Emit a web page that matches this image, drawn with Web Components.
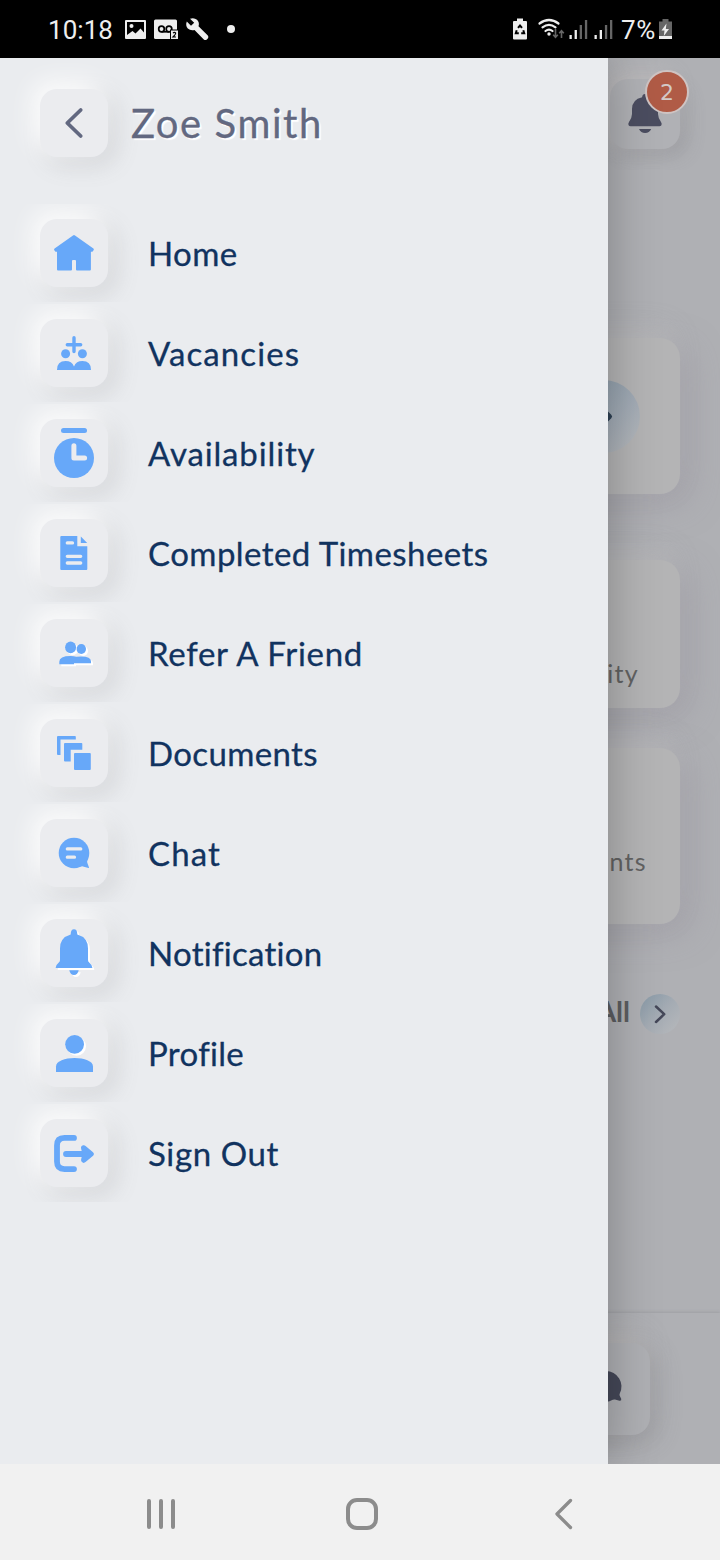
<!DOCTYPE html>
<html lang="en">
<head>
<meta charset="utf-8">
<title>Menu</title>
<style>
    html, body {
        margin: 0;
        padding: 0;
    }

    body {
        width: 720px;
        height: 1560px;
        overflow: hidden;
        font-family: Lato, "Open Sans", sans-serif;
    }
</style>
</head>
<body>
<phone-screen>
    <status-bar slot="status"></status-bar>
    <home-page slot="page"></home-page>
    <side-drawer slot="drawer" name="Zoe Smith">
        <menu-item icon="home" width="89.5">Home</menu-item>
        <menu-item icon="vacancies" width="152">Vacancies</menu-item>
        <menu-item icon="availability" width="167.5">Availability</menu-item>
        <menu-item icon="timesheets" width="340.5">Completed Timesheets</menu-item>
        <menu-item icon="refer" width="215" raised>Refer A Friend</menu-item>
        <menu-item icon="documents" width="170">Documents</menu-item>
        <menu-item icon="chat" width="73">Chat</menu-item>
        <menu-item icon="notification" width="175" raised>Notification</menu-item>
        <menu-item icon="profile" width="95.5">Profile</menu-item>
        <menu-item icon="signout" width="131">Sign Out</menu-item>
    </side-drawer>
    <nav-bar slot="nav"></nav-bar>
</phone-screen>

<script>
const icons = {
    back: `<path d="M40.7 21L27.3 34l13.4 13" fill="none" stroke="#626880" stroke-width="3.8" stroke-linecap="round" stroke-linejoin="round"/>`,
    home: `<path d="M33 16.4q1-.7 2 0L53.4 29.6q.8.8.2 1.7l-1.2 1.4h-1.5v17.8q0 1-1 1H37q-1 0-1-1V42q0-1-1-1h-2q-1 0-1 1v8.500q0 1-1 1H18q-1 0-1-1V32.700h-1.500l-1.200-1.400q-.6-.9.3-1.700z"/>`,
    vacancies: `<path d="M34 18.700v13.800M27.300 25.700h13.400" stroke="currentColor" stroke-width="3.400" stroke-linecap="round"/>
        <circle cx="25.600" cy="34.700" r="4.500"/><circle cx="42.400" cy="34.700" r="4.500"/>
        <path d="M17 50.900q0-8.800 8.600-8.800 6.200 0 8.400 5.400 2.200-5.400 8.400-5.400 8.600 0 8.600 8.800z"/>`,
    availability: `<path d="M23.500 11.500h21" stroke="currentColor" stroke-width="5" stroke-linecap="round"/>
        <circle cx="34" cy="39" r="20"/>
        <path d="M33.900 26.800V39h10.700" fill="none" stroke="#ebecef" stroke-width="5" stroke-linecap="round" stroke-linejoin="round"/>`,
    timesheets: `<path d="M21.300 17h16v10.300h10V50q0 1-1 1h-25q-1 0-1-1V18q0-1 1-1zM40.800 17.500l6.400 6.500h-6.400z"/>
        <path d="M27.300 23.900h5.200M27.300 37.300h13.400M27.300 44h13.400" stroke="#ebecef" stroke-width="3.300" stroke-linecap="round"/>`,
    refer: `<ellipse cx="30.600" cy="28.300" rx="5.500" ry="5.900"/><ellipse cx="41.300" cy="30" rx="4.700" ry="5.100"/>
        <path d="M19.300 45.300v-2.600q0-5.700 11.300-5.700 3.600 0 5.600.7 2-.2 5-.2 9.800 0 9.800 4.800v2H34v1z"/>`,
    documents: `<path d="M18 17h17q.8 0 .8.800v2.600H20.500V36H18q-1 0-1-1V18q0-1 1-1z"/>
        <path d="M25 24h16.500q.8 0 .8.800v5.900H30.700v11.800H25q-1 0-1-1V25q0-1 1-1z"/>
        <rect x="34" y="34" width="16.800" height="16.900" rx="1"/>`,
    chat: `<circle cx="34" cy="34" r="15.300"/>
        <path d="M48 39.500q-1.300 2.500-.7 4.300l1.700 4.800q.1.600-.5.400l-5.500-1.600q-1.500-.3-3.500.4z"/>
        <path d="M27.300 29.900h13.500M27.300 38.200h7.200" stroke="#ebecef" stroke-width="3.200" stroke-linecap="round"/>`,
    notification: `<path d="M34 10.300q3.300 0 3.300 5.200Q48 18.500 48 29.500V41q0 1.500 1.200 2.600 3.200 2.600 3.200 5.400H15.600q0-2.800 3.200-5.400Q20 42.500 20 41V29.500q0-11 10.700-14 0-5.200 3.300-5.200zM29.300 51.300h9.400q-1 4.700-4.700 4.700t-4.700-4.700z"/>`,
    profile: `<circle cx="36.600" cy="27.300" r="9.400" fill="#fff"/><circle cx="34.600" cy="25.300" r="9.400"/><path d="M16 53v-5.500c0-5.500 9-8.500 18.600-8.500S53 42 53 47.500V53z"/>`,
    signout: `<path d="M34 18.900h-9.500q-7.500 0-7.500 7.500v16.200q0 7.500 7.500 7.500H34M26 35h20" fill="none" stroke="currentColor" stroke-width="5.800" stroke-linecap="round"/>
        <path d="M43.800 29l7.200 6-7.200 6 1.500-6z" stroke="currentColor" stroke-width="5.500" stroke-linejoin="round"/>`
};

function define(name, html, connected) {
    customElements.define(name, class extends HTMLElement {
        constructor() {
            super();
            this.attachShadow({mode: "open"}).innerHTML = html;
        }

        connectedCallback() {
            if (connected) connected.call(this, this.shadowRoot);
        }
    });
}

// spreads the letters so that the text takes the given width
class FitText extends HTMLElement {
    constructor() {
        super();
        this.attachShadow({mode: "open"}).innerHTML = `
            <style>
                :host { display: block; white-space: nowrap; }
                span { display: inline-block; }
            </style>
            <span><slot></slot></span>`;
    }

    static get observedAttributes() {
        return ["width"];
    }

    connectedCallback() {
        this.fit();
    }

    attributeChangedCallback() {
        if (this.isConnected) this.fit();
    }

    fit() {
        const span = this.shadowRoot.querySelector("span");
        const length = this.textContent.trim().length;
        if (!length || !this.hasAttribute("width")) return;
        span.style.letterSpacing = "0";
        const natural = span.getBoundingClientRect().width;
        span.style.letterSpacing = (this.getAttribute("width") - natural) / length + "px";
    }
}

customElements.define("fit-text", FitText);

define("soft-button", `
    <style>
        :host {
            display: block;
            flex: none;
            width: 68px;
            height: 68px;
            border-radius: 17px;
            background: #ebecef;
            color: #67a8f9;
            box-shadow: -7px -7px 24px rgba(255,255,255,.95), 7px 7px 24px rgba(110,110,115,.2);
        }

        svg {
            display: block;
            fill: currentColor;
            overflow: visible;
        }

        :host([raised]) svg {
            filter: drop-shadow(2px 2px 0 #fff);
        }
    </style>
    <svg width="68" height="68" viewBox="0 0 68 68"></svg>`, function (root) {
    root.querySelector("svg").innerHTML = icons[this.getAttribute("icon")] || "";
});

define("menu-item", `
    <style>
        :host {
            display: flex;
            align-items: flex-start;
            gap: 40px;
            height: 98px;
            padding: 15px 0 0 40px;
            box-sizing: border-box;
            overflow: hidden;
            color: #11335f;
            font-size: 33px;
            line-height: 40px;
        }

        fit-text {
            margin-top: 14px;
            -webkit-text-stroke: .3px #11335f;
        }
    </style>
    <fit-text></fit-text>`, function (root) {
    const text = root.querySelector("fit-text");
    const button = document.createElement("soft-button");
    button.setAttribute("icon", this.getAttribute("icon"));
    if (this.hasAttribute("raised")) button.setAttribute("raised", "");
    root.insertBefore(button, text);
    text.textContent = this.textContent;
    text.setAttribute("width", this.getAttribute("width"));
});

define("side-drawer", `
    <style>
        :host {
            display: flex;
            flex-direction: column;
            width: 608px;
            height: 100%;
            background: #eaecef;
            box-shadow: 0 0 48px rgba(0,0,0,.28);
        }

        header {
            display: flex;
            gap: 20px;
            height: 146px;
            padding: 31px 0 0 40px;
            box-sizing: border-box;
            overflow: hidden;
        }

        header fit-text {
            margin: 10px 0 0 3px;
            font-size: 40px;
            line-height: 48px;
            color: #626880;
            text-shadow: 2px 2px 1px #fff;
            -webkit-text-stroke: .3px #626880;
        }

        nav {
            display: flex;
            flex-direction: column;
            gap: 2px;
        }
    </style>
    <header>
        <soft-button icon="back"></soft-button>
        <fit-text></fit-text>
    </header>
    <nav><slot></slot></nav>`, function (root) {
    const text = root.querySelector("fit-text");
    text.textContent = this.getAttribute("name");
    text.setAttribute("width", "192");
});

define("home-page", `
    <style>
        :host {
            display: flex;
            flex-direction: column;
            height: 100%;
            background: #afb0b4;
            color: #626262;
        }

        header {
            display: flex;
            justify-content: flex-end;
            height: 112px;
            padding: 21px 40px 0 0;
            box-sizing: border-box;
            overflow: hidden;
        }

        .bell {
            position: relative;
            width: 70px;
            height: 70px;
            border-radius: 18px;
            background: #b0b1b5;
            box-shadow: -6px -6px 18px rgba(200,196,196,.6), 7px 7px 18px rgba(120,120,125,.3);
        }

        .badge {
            position: absolute;
            top: -9px;
            left: 35px;
            width: 40px;
            height: 40px;
            border: 2px solid #cfc4c3;
            border-radius: 50%;
            background: #b05b46;
            color: #d3c9c8;
            font: 22px/42px "DejaVu Sans", sans-serif;
            text-align: center;
        }

        main {
            display: flex;
            flex-direction: column;
            align-items: flex-end;
            flex: 1;
            padding: 168px 40px 0 0;
        }

        .card {
            display: flex;
            align-items: flex-end;
            justify-content: flex-end;
            width: 310px;
            box-sizing: border-box;
            border-radius: 20px;
            background: #b4b4b5;
            box-shadow: -8px -8px 24px rgba(190,190,190,.55), 10px 10px 32px rgba(150,146,158,.5);
            font-size: 25px;
            line-height: 30px;
            letter-spacing: 1.300px;
        }

        .wide {
            align-items: center;
            width: 640px;
            height: 156px;
            padding-right: 40px;
            margin-bottom: 66px;
        }

        .short {
            height: 148px;
            padding: 0 41px 20px 0;
            margin-bottom: 40px;
        }

        .tall {
            height: 176px;
            padding: 0 33px 48px 0;
        }

        .disc {
            display: block;
            border-radius: 50%;
            background: linear-gradient(135deg, #8799a7, #a4abb3 50%, #b7b9bc);
        }

        .wide .disc {
            background: linear-gradient(135deg, #8799a7, #a3acb6 60%, #b7b9bc);
        }

        .all {
            display: flex;
            align-items: center;
            gap: 10px;
            margin-top: 70px;
            color: #5c5d60;
            font-size: 28px;
            font-weight: bold;
            line-height: 40px;
        }

        .all span {
            padding-bottom: 5px;
            line-height: 35px;
        }

        footer {
            display: flex;
            justify-content: flex-end;
            height: 151px;
            padding: 30px 70px 0 0;
            box-sizing: border-box;
            overflow: hidden;
            box-shadow: 0 -1px 3px rgba(120,120,125,.3);
        }

        .tab {
            width: 92px;
            height: 92px;
            border-radius: 18px;
            background: #afb0b4;
            box-shadow: -7px -7px 24px rgba(195,192,190,.55), 7px 7px 24px rgba(110,110,115,.3);
        }

        svg {
            display: block;
        }
    </style>
    <header>
        <div class="bell">
            <svg width="70" height="70" viewBox="0 0 70 70" fill="#4b4d60">
                <path d="M35 15q2.500 0 2.900 3.200Q48 20.500 48 30v5q0 3.500 3 8 1.200 2 .4 3.200-.6 1.100-2 1.100H20.600q-1.400 0-2-1.100-.8-1.200.4-3.200 3-4.500 3-8v-5q0-9.500 10.100-11.800Q32.500 15 35 15zM29 50h12.200q-1.800 4-6.100 4T29 50z"/>
            </svg>
            <div class="badge">2</div>
        </div>
    </header>
    <main>
        <div class="card wide">
            <svg class="disc" width="73" height="73" viewBox="0 0 73 73">
                <path d="M32 26l10.500 10.500L32 47" fill="none" stroke="#2f4154" stroke-width="5" stroke-linecap="round" stroke-linejoin="round"/>
            </svg>
        </div>
        <div class="card short">Availability</div>
        <div class="card tall">Documents</div>
        <div class="all"><span>See All</span>
            <svg class="disc" width="40" height="40" viewBox="0 0 40 40">
                <path d="M16 12.500l8.200 7.700-8.200 7.800" fill="none" stroke="#454859" stroke-width="2.500" stroke-linecap="round" stroke-linejoin="round"/>
            </svg>
        </div>
    </main>
    <footer>
        <div class="tab">
            <svg width="92" height="92" viewBox="0 0 92 92" fill="#454858">
                <path d="M48 28a15.500 15.500 0 0 1 13.800 22.500q-.6 1.200 0 2.600l1.400 2.700q.6 2.300-1.700 2l-4.500-1.200q-1-.3-2.200.2A15.500 15.500 0 1 1 48 28z"/>
            </svg>
        </div>
    </footer>`);

define("status-bar", `
    <style>
        :host {
            display: flex;
            align-items: center;
            justify-content: space-between;
            height: 58px;
            padding: 0 48px;
            box-sizing: border-box;
            background: #000;
            color: #eee;
            font: 26px/58px Roboto, sans-serif;
        }

        div {
            display: flex;
            align-items: center;
        }

        .time {
            width: 66px;
        }

        .charge {
            width: 36px;
        }

        .time, .charge {
            padding-top: 2px;
        }

        svg {
            display: block;
            fill: #eee;
        }
    </style>
    <div>
        <fit-text class="time" width="65">10:18</fit-text>
        <svg width="126" height="58" viewBox="114 0 126 58">
            <path fill-rule="evenodd" d="M126 20h19q1 0 1 1v17q0 1-1 1h-19q-1 0-1-1V21q0-1 1-1zm1 2v13l5.500-4 3 2.500 5-5 3.500 4V22z"/>
            <circle cx="131.500" cy="26" r="2"/>
            <rect x="154" y="19.500" width="23" height="19.500" rx="1.500"/>
            <g fill="none" stroke="#000" stroke-width="1.700"><circle cx="161.500" cy="29" r="2.800"/><circle cx="169" cy="29" r="2.800"/><path d="M161.500 31.800h8"/></g>
            <rect x="170" y="29.500" width="9" height="11" fill="#000"/>
            <rect x="171" y="30.500" width="7" height="8.500"/>
            <path d="M173 33q1.500-1.300 2.600 0 .4 1-2.600 4h3" fill="none" stroke="#000" stroke-width="1.200"/>
            <path d="M190 18.800q4-1.500 7 1 2.800 2.800 1.500 6.500l9.300 9.300q1.300 1.500 0 2.800l-1 1q-1.500 1.300-3 0l-9.300-9.400q-4 1-6.700-1.500-2.600-2.900-1-6.900l4.200 4.200 3.200-3z"/>
            <circle cx="231" cy="29" r="4"/>
        </svg>
    </div>
    <div>
        <svg width="109" height="58" viewBox="512 0 109 58">
            <path d="M517 18.500h6V21h3q1 0 1 1v16.500q0 1-1 1h-12q-1 0-1-1V22q0-1 1-1h3z"/>
            <path d="M518 27.800l2-2.300 2 2.300M523.300 30.300l.9 3h-3M516.700 30.300l-.9 3h3" fill="none" stroke="#000" stroke-width="2"/>
            <g fill="none" stroke="#eee" stroke-width="2.200" stroke-linecap="round"><path d="M539.500 23.500q9.500-7 19 0M542.500 27.300q6.500-5 13 0M545.500 31q3.500-2.800 7 0"/></g>
            <circle cx="549" cy="34" r="1.700"/>
            <path d="M555.500 29v8m-2.300-2.300l2.300 2.600 2.300-2.600M561.500 38v-7m-2.300 2.300l2.300-2.600 2.300 2.600" fill="none" stroke="#666" stroke-width="1.600"/>
            <path d="M569.500 35h2.300v4h-2.300zM574.600 30h2.300v9h-2.300zM594.500 35h2.300v4h-2.300zM599.700 30h2.300v9h-2.300z"/>
            <path d="M579.700 25h2.300v14h-2.300zM584.900 20h2.300v19h-2.300zM604.900 25h2.300v14h-2.300zM610 20h2.300v19H610z" fill="#666"/>
        </svg>
        <fit-text class="charge" width="35">7%</fit-text>
        <svg width="15" height="58" viewBox="657 0 15 58">
            <path d="M662.500 19h6v2.500h3.500V39h-13V21.500h3.500z" fill="#666"/>
            <path d="M659 36h13v3h-13zM666.500 23.500l-5 7h3l-.7 5.500 5.200-7h-3.200z"/>
        </svg>
    </div>`);

define("nav-bar", `
    <style>
        :host {
            display: flex;
            align-items: center;
            justify-content: space-between;
            height: 96px;
            padding: 0 141px;
            box-sizing: border-box;
            background: #f1f1f1;
        }

        svg {
            display: block;
            margin-top: 4px;
            fill: none;
            stroke: #8c8c8c;
            stroke-width: 4;
            stroke-linecap: round;
            stroke-linejoin: round;
        }
    </style>
    <svg width="40" height="40"><path d="M8 7v26M20 7v26M32 7v26"/></svg>
    <svg width="40" height="40"><rect x="8" y="6" width="28" height="28" rx="9"/></svg>
    <svg width="40" height="40"><path d="M31.500 6.500L18 20l13.500 13.500" stroke-width="3.300"/></svg>`);

define("phone-screen", `
    <style>
        :host {
            display: grid;
            grid-template-rows: 58px 1406px 96px;
            width: 720px;
            height: 1560px;
        }

        .stage {
            position: relative;
            overflow: hidden;
        }

        .overlay {
            position: absolute;
            top: 0;
            bottom: 0;
            left: 0;
        }
    </style>
    <slot name="status"></slot>
    <div class="stage">
        <slot name="page"></slot>
        <div class="overlay"><slot name="drawer"></slot></div>
    </div>
    <slot name="nav"></slot>`);
</script>
</body>
</html>
